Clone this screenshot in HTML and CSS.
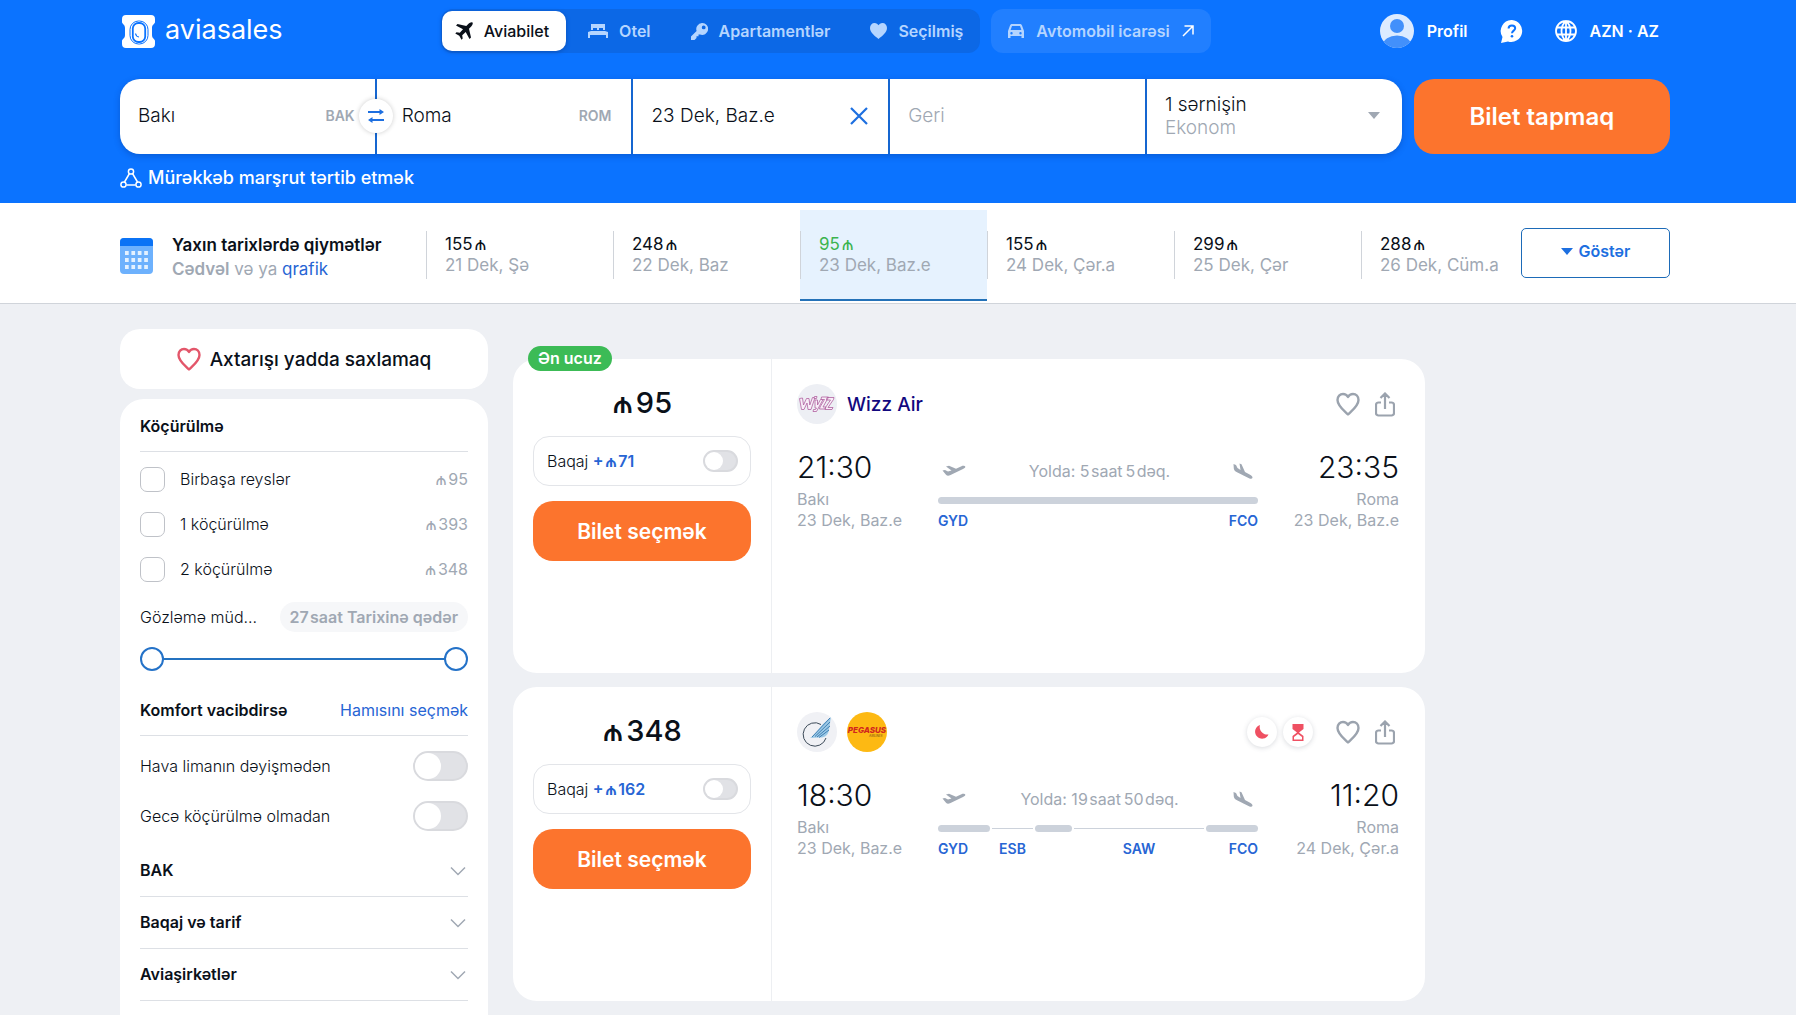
FILE: index.html
```html
<!DOCTYPE html>
<html lang="az">
	<head>
		<meta charset="UTF-8" />
		<meta name="viewport" content="width=device-width, initial-scale=1.0" />
		<title>Bakı - Roma | Aviasales</title>
		<link rel="stylesheet" href="styles.css">
	</head>
	<body>
		<!-- Shared icons -->
		<svg class="sprite" aria-hidden="true">
			<symbol id="i-heart" viewBox="0 0 24 24">
				<path d="M12 22.5C8 18.5 1.5 14 1.5 8C1.5 4.5 4 2 7 2C9.300 2 11 3.200 12 5C13 3.200 14.700 2 17 2C20 2 22.500 4.500 22.500 8C22.500 14 16 18.500 12 22.500Z" fill="none" stroke="currentColor" stroke-width="2.400" stroke-linejoin="round" />
			</symbol>
			<symbol id="i-share" viewBox="0 0 20 25">
				<path d="M6 10.500H3.500A2.500 2.500 0 0 0 1 13V21A2.500 2.500 0 0 0 3.500 23.500H16.500A2.500 2.500 0 0 0 19 21V13A2.500 2.500 0 0 0 16.500 10.500H14M10 17V2M5.500 6L10 1.500L14.500 6" fill="none" stroke="currentColor" stroke-width="2.200" />
			</symbol>
			<symbol id="i-takeoff" viewBox="0 0 24 12">
				<path d="M0.500 5.500L3 5L6 6.500L9.500 5.500L4 1.500L7 0.800L14 3.800L19.500 1.200C21 .6 23 .8 23.300 1.800C23.500 2.800 22 3.600 21 4L8 10.200C6.500 11 5 10.800 4 9.800Z" fill="currentColor" />
			</symbol>
			<symbol id="i-land" viewBox="0 0 20 17">
				<path d="M0.500 1L3 2L4.500 5L7.500 7L6.500 0.500L8.500 1.300L12 9L17.500 12C19 12.800 19.800 14.200 19.400 15C19 16 17.500 15.800 16.500 15.400L4.500 9.500C2.500 8.500 1 7.500.8 5.500Z" fill="currentColor" />
			</symbol>
			<symbol id="i-chevron" viewBox="0 0 16 10">
				<path d="M1 1.500L8 8.500L15 1.500" fill="none" stroke="currentColor" stroke-width="1.500" />
			</symbol>
		</svg>

		<header class="header">
			<div class="wrap">
				<div class="topbar">
					<a class="logo" href="#">
						<svg width="33" height="33" viewBox="0 0 33 33" aria-hidden="true">
							<path d="M4 0H29A4 4 0 0 1 33 4V7C33 9 30 9.500 30 13V20C30 23.500 33 24 33 26V29A4 4 0 0 1 29 33H4A4 4 0 0 1 0 29V26C0 24 3 23.500 3 20V13C3 9.500 0 9 0 7V4A4 4 0 0 1 4 0Z" fill="#fff" />
							<rect x="8" y="6" width="18" height="23" rx="8.500" fill="none" stroke="#0b73ff" stroke-width="1" />
							<rect x="10.800" y="8" width="12.400" height="19" rx="5.500" fill="none" stroke="#0b73ff" stroke-width="1.800" />
							<path d="M13.500 18.500Q14 21.500 17 22" fill="none" stroke="#0b73ff" stroke-width="1.200" />
						</svg>
						<span>aviasales</span>
					</a>

					<nav class="menu">
						<div class="tabs">
							<a class="tab tab-active" href="#">
								<svg width="18" height="18" viewBox="0 0 18 18" aria-hidden="true">
									<path d="M17.500.5C16.500-.3 14.500.8 13.500 1.800L11.300 4L2.500 2L1 3.500L8 7.300L4.800 10.800L1.500 10.300L.3 11.500L4.300 13.700L6.500 17.700L7.700 16.500L7.200 13.200L10.700 10L14.500 17L16 15.500L14 6.700L16.200 4.500C17.200 3.500 18.300 1.500 17.500.5Z" fill="currentColor" />
								</svg>
								<span>Aviabilet</span>
							</a>
							<a class="tab" href="#">
								<svg width="20" height="14" viewBox="0 0 20 14" aria-hidden="true">
									<path d="M3 0H17V6H15V4H11V6H9V4H5V6H3ZM0 8L3 7H17L20 8V14H18V11H2V14H0Z" fill="currentColor" />
								</svg>
								<span>Otel</span>
							</a>
							<a class="tab" href="#">
								<svg width="17" height="17" viewBox="0 0 17 17" aria-hidden="true">
									<path fill-rule="evenodd" d="M11 0A6 6 0 1 1 9 11.600L7.500 11.600V13.200H5.500V15L3.500 17H0V13.500L5.600 8A6 6 0 0 1 11 0ZM12.700 2.500A1.900 1.900 0 1 0 12.700 6.300A1.900 1.900 0 0 0 12.700 2.500Z" fill="currentColor" />
								</svg>
								<span>Apartamentlər</span>
							</a>
							<a class="tab" href="#">
								<svg width="17" height="16" viewBox="0 0 17 16" aria-hidden="true">
									<path d="M8.500 16C5 13 0 9.500 0 5C0 2 2 0 4.500 0C6.500 0 7.800 1 8.500 2.300C9.200 1 10.500 0 12.500 0C15 0 17 2 17 5C17 9.500 12 13 8.500 16Z" fill="currentColor" />
								</svg>
								<span>Seçilmiş</span>
							</a>
						</div>
						<a class="rental" href="#">
							<svg width="16" height="14" viewBox="0 0 16 14" aria-hidden="true">
								<path fill-rule="evenodd" d="M4 0H12C13 0 13.600.5 14 1.500L16 7V14H13.500V12H2.500V14H0V7L2 1.500C2.400.5 3 0 4 0ZM4 2L2.600 6H13.400L12 2ZM3.500 8A1.200 1.200 0 1 0 3.500 10.400A1.200 1.200 0 0 0 3.500 8ZM12.500 8A1.200 1.200 0 1 0 12.500 10.400A1.200 1.200 0 0 0 12.500 8Z" fill="currentColor" />
							</svg>
							<span>Avtomobil icarəsi</span>
							<svg class="out" width="12" height="12" viewBox="0 0 12 12" aria-hidden="true">
								<path d="M1 11L11 1M2.500 1H11V9.500" fill="none" stroke="currentColor" stroke-width="1.500" />
							</svg>
						</a>
					</nav>

					<div class="user">
						<a class="profile" href="#">
							<svg width="34" height="34" viewBox="0 0 34 34" aria-hidden="true">
								<clipPath id="face"><circle cx="17" cy="17" r="17" /></clipPath>
								<g clip-path="url(#face)">
									<rect width="34" height="34" fill="#dcebff" />
									<circle cx="17" cy="12" r="7" fill="#4290fb" />
									<ellipse cx="17" cy="31" rx="14" ry="9.500" fill="#4290fb" />
								</g>
							</svg>
							<span>Profil</span>
						</a>
						<a class="help" href="#" aria-label="Kömək">
							<svg width="23" height="23" viewBox="0 0 23 23" aria-hidden="true">
								<path d="M12 0A11 11 0 1 1 8 21.500L1 23L2.500 17A11 11 0 0 1 12 0Z" fill="#fff" />
								<path d="M8.600 8.500C8.600 6.500 10 5.400 11.900 5.400C13.900 5.400 15.200 6.600 15.200 8.300C15.200 10.500 12 10.800 12 13.200" fill="none" stroke="#0b73ff" stroke-width="2" />
								<circle cx="12" cy="16.300" r="1.300" fill="#0b73ff" />
							</svg>
						</a>
						<a class="locale" href="#">
							<svg width="22" height="22" viewBox="0 0 22 22" aria-hidden="true">
								<path d="M11 1A10 10 0 1 0 11 21A10 10 0 1 0 11 1ZM11 1C5 6 5 16 11 21C17 16 17 6 11 1ZM11 1V21M2 7.500H20M2 14.500H20" fill="none" stroke="#fff" stroke-width="1.800" />
							</svg>
							<span>AZN · AZ</span>
						</a>
					</div>
				</div>

				<form class="search">
					<div class="fields">
						<div class="field">
							<input id="from" type="text" value="Bakı" aria-label="Haradan" />
							<label class="code" for="from">BAK</label>
							<button class="swap" type="button" aria-label="Dəyişmək">
								<svg width="18" height="14" viewBox="0 0 18 14" aria-hidden="true">
									<path d="M1 3H14M4 11H17" stroke="currentColor" stroke-width="2" />
									<path d="M12.500 0L17 3L12.500 6ZM5.500 8L1 11L5.500 14Z" fill="currentColor" />
								</svg>
							</button>
						</div>
						<div class="field field-to">
							<input id="to" type="text" value="Roma" aria-label="Haraya" />
							<label class="code" for="to">ROM</label>
						</div>
						<div class="field">
							<input type="text" value="23 Dek, Baz.e" aria-label="Gediş" />
							<button class="clear" type="button" aria-label="Təmizləmək">
								<svg width="18" height="18" viewBox="0 0 18 18" aria-hidden="true">
									<path d="M1 1L17 17M17 1L1 17" stroke="currentColor" stroke-width="2.200" />
								</svg>
							</button>
						</div>
						<div class="field">
							<input type="text" placeholder="Geri" aria-label="Qayıdış" />
						</div>
						<button class="field passengers" type="button">
							<span class="who">1 sərnişin<span>Ekonom</span></span>
							<svg width="12" height="7" viewBox="0 0 12 7" aria-hidden="true">
								<path d="M0 0H12L6 7Z" fill="currentColor" />
							</svg>
						</button>
					</div>
					<button class="orange find" type="submit">Bilet tapmaq</button>
				</form>

				<a class="complex" href="#">
					<svg width="22" height="20" viewBox="0 0 22 20" aria-hidden="true">
						<path d="M9.500 5.500L4.500 14M12.500 5.500L17.500 14M6.500 17H15.500" stroke="currentColor" stroke-width="1.500" />
						<g fill="none" stroke="currentColor" stroke-width="1.500">
							<circle cx="11" cy="3.500" r="2.600" />
							<circle cx="3.500" cy="16.500" r="2.600" />
							<circle cx="18.500" cy="16.500" r="2.600" />
						</g>
					</svg>
					<span>Mürəkkəb marşrut tərtib etmək</span>
				</a>
			</div>
		</header>

		<section class="dates">
			<div class="wrap dates-row">
				<div class="dates-title">
					<svg width="33" height="36" viewBox="0 0 33 36" aria-hidden="true">
						<rect width="33" height="36" rx="4" fill="#6db1fd" />
						<path d="M0 8V4A4 4 0 0 1 4 0H29A4 4 0 0 1 33 4V8Z" fill="#0b73f5" />
						<path d="M5 15H29M5 22H29M5 29H29" stroke="#e4f1ff" stroke-width="4" stroke-dasharray="3.700 2.700" />
					</svg>
					<div>
						<h2>Yaxın tarixlərdə qiymətlər</h2>
						<p><b>Cədvəl</b> və ya <a href="#">qrafik</a></p>
					</div>
				</div>
				<div class="days">
					<a class="day" href="#"><b>155&#8202;₼</b><span>21 Dek, Şə</span></a>
					<a class="day" href="#"><b>248&#8202;₼</b><span>22 Dek, Baz</span></a>
					<a class="day day-active" href="#"><b>95&#8202;₼</b><span>23 Dek, Baz.e</span></a>
					<a class="day" href="#"><b>155&#8202;₼</b><span>24 Dek, Çər.a</span></a>
					<a class="day" href="#"><b>299&#8202;₼</b><span>25 Dek, Çər</span></a>
					<a class="day" href="#"><b>288&#8202;₼</b><span>26 Dek, Cüm.a</span></a>
				</div>
				<button class="show" type="button">
					<svg width="12" height="7" viewBox="0 0 12 7" aria-hidden="true">
						<path d="M0 0H12L6 7Z" fill="currentColor" />
					</svg>
					Göstər
				</button>
			</div>
		</section>

		<main class="wrap main">
			<aside class="sidebar">
				<button class="save" type="button">
					<svg width="24" height="24"><use href="#i-heart" /></svg>
					Axtarışı yadda saxlamaq
				</button>

				<div class="filters">
					<div class="filter-head"><h3>Köçürülmə</h3></div>
					<div class="checks">
						<label class="check"><input type="checkbox" /><span>Birbaşa reyslər</span><em>₼&#8202;95</em></label>
						<label class="check"><input type="checkbox" /><span>1 köçürülmə</span><em>₼&#8202;393</em></label>
						<label class="check"><input type="checkbox" /><span>2 köçürülmə</span><em>₼&#8202;348</em></label>
					</div>
					<div class="wait">
						<span>Gözləmə müd...</span>
						<b>27&#8202;saat Tarixinə qədər</b>
					</div>
					<div class="range">
						<input type="range" min="0" max="27" value="0" aria-label="Gözləmə müddəti, ən az" />
						<input type="range" min="0" max="27" value="27" aria-label="Gözləmə müddəti, ən çox" />
					</div>

					<div class="filter-head">
						<h3>Komfort vacibdirsə</h3>
						<a href="#">Hamısını seçmək</a>
					</div>
					<div class="switches">
						<label><span>Hava limanın dəyişmədən</span><input class="toggle" type="checkbox" /></label>
						<label><span>Gecə köçürülmə olmadan</span><input class="toggle" type="checkbox" /></label>
					</div>

					<button class="fold" type="button">BAK <svg width="16" height="10"><use href="#i-chevron" /></svg></button>
					<button class="fold" type="button">Baqaj və tarif <svg width="16" height="10"><use href="#i-chevron" /></svg></button>
					<button class="fold" type="button">Aviaşirkətlər <svg width="16" height="10"><use href="#i-chevron" /></svg></button>
				</div>
			</aside>

			<div class="results">
				<article class="ticket">
					<span class="badge">Ən ucuz</span>
					<div class="offer">
						<p class="price">₼&#8202;95</p>
						<label class="baggage">
							<span>Baqaj <b>+&#8202;₼&#8202;71</b></span>
							<input class="toggle toggle-small" type="checkbox" />
						</label>
						<button class="orange pick" type="button">Bilet seçmək</button>
					</div>
					<div class="info">
						<div class="carriers">
							<svg width="40" height="40" viewBox="0 0 40 40" aria-hidden="true">
								<circle cx="20" cy="20" r="20" fill="#edeff4" />
								<g fill="#f8eef8" stroke="#b0609f" stroke-width=".8" stroke-linejoin="round">
									<path d="M2.500 14.500L5.500 14L6.500 21L9.500 14.500H12L12.800 21L15.500 13.500H18L14 25.500H11L10 19L7 25.500H4.500Z" />
									<path d="M18 16H20.500L20.500 21L23.500 15.500H26L19.500 27.500H16L16.500 25.500H18.500L19.500 24H18ZM17.500 12.500H20L19.500 14.500H17Z" />
									<path d="M24.500 13H31.500L30.500 15L26 23H29L28 25H22.500L23 23L27.500 15.500H24ZM30 13.500H37L36.500 15.500L31 23.500H36L35 25.500H28L28.500 23.500L33.500 16H29.500Z" />
								</g>
							</svg>
							<span>Wizz Air</span>
							<div class="actions">
								<button type="button" aria-label="Seçilmişlərə əlavə etmək"><svg width="24" height="24"><use href="#i-heart" /></svg></button>
								<button type="button" aria-label="Paylaşmaq"><svg width="20" height="25"><use href="#i-share" /></svg></button>
							</div>
						</div>
						<div class="flight">
							<div class="point">
								<b>21:30</b>
								<span>Bakı</span>
								<span>23 Dek, Baz.e</span>
							</div>
							<div class="route">
								<div class="duration">
									<svg width="24" height="12"><use href="#i-takeoff" /></svg>
									<span>Yolda: 5&#8202;saat&#8201;5&#8202;dəq.</span>
									<svg width="20" height="17"><use href="#i-land" /></svg>
								</div>
								<div class="track" style="grid-template-columns: 1fr 1fr">
									<i class="seg seg-full"></i>
									<span>GYD</span>
									<span class="end">FCO</span>
								</div>
							</div>
							<div class="point point-end">
								<b>23:35</b>
								<span>Roma</span>
								<span>23 Dek, Baz.e</span>
							</div>
						</div>
					</div>
				</article>

				<article class="ticket">
					<div class="offer">
						<p class="price">₼&#8202;348</p>
						<label class="baggage">
							<span>Baqaj <b>+&#8202;₼&#8202;162</b></span>
							<input class="toggle toggle-small" type="checkbox" />
						</label>
						<button class="orange pick" type="button">Bilet seçmək</button>
					</div>
					<div class="info">
						<div class="carriers">
							<svg width="40" height="40" viewBox="0 0 40 40" aria-hidden="true">
								<circle cx="20" cy="20" r="20" fill="#f0f1f5" />
								<path d="M24 12.500A11.700 11.700 0 1 0 29 26" fill="none" stroke="#3c4a58" stroke-width="1" />
								<path d="M13 26C19 23 21 15 34 5C33 9 33 14 32 18C31 23 28 26 22 25.500Z" fill="#9cc9e6" />
								<path d="M15 25L33 6M18 24.500L33 10M20 25L33 14M22 25.500L32 18" stroke="#3f7fb4" stroke-width="1" />
							</svg>
							<svg width="40" height="40" viewBox="0 0 40 40" aria-hidden="true">
								<circle cx="20" cy="20" r="20" fill="#fdb913" />
								<text class="pegasus" x="20" y="21" text-anchor="middle">PEGASUS</text>
								<text class="pegasus-sub" x="22" y="25">AIRLINES</text>
							</svg>
							<div class="actions">
								<span class="warn">
									<svg width="16" height="16" viewBox="0 0 16 16" aria-hidden="true">
										<path d="M6 1A7 7 0 1 0 14.500 10.500A7.500 7.500 0 0 1 6 1Z" fill="#ef5062" />
									</svg>
								</span>
								<span class="warn">
									<svg width="12" height="17" viewBox="0 0 12 17" aria-hidden="true">
										<path d="M.5 0H11.500V5L7 8.500L11.500 12V17H.5V12L5 8.500L.5 5ZM2 13V15.500H10V13L6 10Z" fill="#ef5062" fill-rule="evenodd" />
									</svg>
								</span>
								<button class="after-warn" type="button" aria-label="Seçilmişlərə əlavə etmək"><svg width="24" height="24"><use href="#i-heart" /></svg></button>
								<button type="button" aria-label="Paylaşmaq"><svg width="20" height="25"><use href="#i-share" /></svg></button>
							</div>
						</div>
						<div class="flight">
							<div class="point">
								<b>18:30</b>
								<span>Bakı</span>
								<span>23 Dek, Baz.e</span>
							</div>
							<div class="route">
								<div class="duration">
									<svg width="24" height="12"><use href="#i-takeoff" /></svg>
									<span>Yolda: 19&#8202;saat&#8201;50&#8202;dəq.</span>
									<svg width="20" height="17"><use href="#i-land" /></svg>
								</div>
								<div class="track" style="grid-template-columns: 52fr 45fr 37fr 134fr 52fr">
									<i class="seg"></i><i class="stop"></i><i class="seg"></i><i class="stop"></i><i class="seg"></i>
									<span>GYD</span>
									<span class="mid">ESB</span>
									<span></span>
									<span class="mid">SAW</span>
									<span class="end">FCO</span>
								</div>
							</div>
							<div class="point point-end">
								<b>11:20</b>
								<span>Roma</span>
								<span>24 Dek, Çər.a</span>
							</div>
						</div>
					</div>
				</article>
			</div>
		</main>
	</body>
</html>
```
FILE: styles.css
```css
* {
	box-sizing: border-box;
}

body {
	margin: 0;
	background: #eef0f4;
	color: #0a1019;
	font-family: "Inter", "Liberation Sans", sans-serif;
	font-size: 16px;
	line-height: 21px;
	overflow-x: hidden;
}

a {
	color: #2765d4;
	text-decoration: none;
}

h2,
h3,
p {
	margin: 0;
}

button {
	border: none;
	background: none;
	padding: 0;
	color: inherit;
	font: inherit;
	cursor: pointer;
}

svg {
	display: block;
	flex: none;
}

.sprite {
	position: absolute;
	width: 0;
	height: 0;
}

.wrap {
	padding: 0 126px 0 120px;
}

.orange {
	background: #fc742d;
	color: #fff;
	border-radius: 20px;
	font-weight: 600;
}

/* Header */
.header {
	background: #0b73ff;
	color: #fff;
	padding: 9px 0 13px;
}

.topbar {
	display: flex;
	justify-content: space-between;
	align-items: center;
}

.logo {
	display: flex;
	align-items: center;
	gap: 10px;
	margin-left: 2px;
	color: #fff;
	font-size: 27px;
	line-height: 32px;
}

.logo span {
	padding-bottom: 2px;
}

.menu {
	display: flex;
	gap: 11px;
	font-weight: 600;
	line-height: 20px;
}

.tabs {
	display: flex;
	align-items: center;
	height: 44px;
	padding-right: 17px;
	background: #0c68e6;
	border-radius: 12px;
}

.tab {
	display: flex;
	align-items: center;
	gap: 11px;
	color: #b5d5ff;
	margin-left: 40px;
}

.tab-active {
	height: 40px;
	padding: 0 17px 0 13px;
	margin: 0 -18px 0 1px;
	background: #fff;
	border-radius: 10px;
	color: #0a1019;
	font-weight: 500;
	box-shadow: 0 1px 4px #0a50b8;
}

.rental {
	display: flex;
	align-items: center;
	gap: 12px;
	height: 44px;
	padding: 0 17px;
	background: #217fff;
	border-radius: 12px;
	color: #b5d5ff;
}

.out {
	color: #fff;
}

.user {
	display: flex;
	align-items: center;
	padding: 0 11px;
	gap: 32px;
	font-weight: 600;
}

.user a {
	color: #fff;
}

.profile,
.locale {
	display: flex;
	align-items: center;
	gap: 13px;
}

.search {
	display: grid;
	grid-template-columns: 5fr 1fr;
	gap: 12px;
	height: 75px;
	margin-top: 26px;
}

.fields {
	display: grid;
	grid-template-columns: repeat(5, 1fr);
	gap: 2px;
	border-radius: 20px;
	background: #1566d0;
	box-shadow: 0 2px 6px rgba(0, 40, 120, 0.3);
}

.field {
	position: relative;
	display: flex;
	align-items: center;
	min-width: 0;
	padding: 0 20px 2px 18px;
	background: #fff;
	color: #0a1019;
	font-size: 19px;
	font-weight: 300;
}

.field:first-child {
	border-radius: 20px 0 0 20px;
}

.field-to {
	padding-left: 25px;
}

.field input {
	flex: 1;
	min-width: 0;
	height: 32px;
	padding: 0;
	border: none;
	outline: none;
	background: none;
	color: inherit;
	font: inherit;
	line-height: 32px;
}

.field input::placeholder {
	color: #a0a8b3;
}

.code {
	color: #a0a8b3;
	font-size: 14px;
	font-weight: 600;
}

.swap {
	position: absolute;
	right: -18px;
	z-index: 1;
	width: 34px;
	height: 34px;
	display: grid;
	place-items: center;
	border-radius: 50%;
	background: #fff;
	color: #1d6fe0;
	box-shadow: 0 0 5px rgba(0, 0, 0, 0.2);
}

.clear {
	color: #1d6fe0;
}

.passengers {
	justify-content: space-between;
	padding-right: 22px;
	border-radius: 0 20px 20px 0;
	line-height: 23px;
	text-align: left;
}

.who span {
	display: block;
}

.passengers span span,
.passengers svg {
	color: #a0a8b3;
}

.find {
	font-size: 24px;
}

.complex {
	display: flex;
	align-items: center;
	gap: 6px;
	width: fit-content;
	margin-top: 12px;
	color: #fff;
	font-size: 18px;
	font-weight: 500;
	line-height: 24px;
}

/* Prices for the nearest dates */
.dates {
	height: 101px;
	background: #fff;
	border-bottom: 1px solid #d0d4da;
}

.dates-row {
	display: flex;
}

.dates-title {
	display: flex;
	gap: 19px;
	width: 306px;
	padding-top: 30px;
	font-size: 17px;
	line-height: 24px;
	color: #a0a8b3;
}

.dates-title svg {
	margin-top: 5px;
}

.dates-title h2 {
	color: #0a1019;
	font-size: 17px;
	font-weight: 600;
	white-space: nowrap;
}

.dates-title b {
	font-weight: 600;
}

.days {
	display: flex;
	flex: 1;
	min-width: 0;
	margin-top: 7px;
	overflow: hidden;
}

.day {
	flex: 0 0 187px;
	height: 91px;
	padding: 21px 0;
	border-bottom: 2px solid transparent;
	font-size: 17px;
	line-height: 21px;
	white-space: nowrap;
}

.day b,
.day span {
	display: block;
	padding-left: 18px;
	border-left: 1px solid #d0d4da;
	color: #a0a8b3;
	font-weight: 400;
}

.day b {
	padding-top: 3px;
	color: #0a1019;
}

.day span {
	padding-bottom: 3px;
}

.day-active {
	background: #e6f2fe;
	border-color: #2472b8;
}

.day-active b {
	color: #3cb44f;
}

.show {
	display: flex;
	align-items: center;
	justify-content: center;
	gap: 6px;
	width: 149px;
	height: 50px;
	margin: 25px 0 0 18px;
	padding-bottom: 4px;
	border: 1px solid #1d6bb8;
	border-radius: 5px;
	color: #1d6fe0;
	font-weight: 600;
}

/* Content */
.main {
	display: flex;
	gap: 25px;
	padding-top: 25px;
	align-items: flex-start;
}

.sidebar {
	flex: none;
	width: 368px;
}

.save {
	display: flex;
	align-items: center;
	justify-content: center;
	gap: 9px;
	width: 100%;
	height: 60px;
	border-radius: 20px;
	background: #fff;
	font-size: 19px;
	font-weight: 500;
}

.save svg {
	color: #e3566a;
}

.filters {
	margin-top: 10px;
	padding: 0 20px 40px;
	border-radius: 24px;
	background: #fff;
	font-weight: 300;
}

.filter-head {
	display: flex;
	justify-content: space-between;
	padding: 17px 0 14px;
	border-bottom: 1px solid #dde0e5;
	font-weight: 400;
}

.filter-head h3 {
	font-size: 16px;
	font-weight: 600;
}

.checks {
	display: grid;
	gap: 20px;
	padding-top: 15px;
}

.check {
	display: flex;
	align-items: center;
	height: 25px;
}

.check input {
	appearance: none;
	width: 25px;
	height: 25px;
	margin: 0 15px 0 0;
	border: 1px solid #bfc2c8;
	border-radius: 7px;
}

.check em {
	margin-left: auto;
	color: #a0a8b3;
	font-style: normal;
	font-weight: 400;
}

.wait {
	display: flex;
	align-items: center;
	justify-content: space-between;
	height: 30px;
	margin-top: 20px;
}

.wait b {
	padding: 0 10px;
	border-radius: 15px;
	background: #f6f7f9;
	color: #a0a8b3;
	font-weight: 600;
	line-height: 30px;
}

.range {
	display: grid;
	margin: 15px 0 12px;
	background: linear-gradient(#2472c0, #2472c0) center / 90% 2px no-repeat;
}

.range input {
	grid-area: 1 / 1;
	appearance: none;
	width: 100%;
	height: 24px;
	margin: 0;
	background: none;
	pointer-events: none;
}

.range input::-webkit-slider-thumb {
	appearance: none;
	width: 24px;
	height: 24px;
	border: 2px solid #2472c8;
	border-radius: 50%;
	background: #fff;
	pointer-events: auto;
}

.switches {
	display: grid;
	gap: 20px;
	padding: 15px 0 14px;
}

.switches label,
.baggage {
	display: flex;
	align-items: center;
	justify-content: space-between;
}

.toggle {
	appearance: none;
	display: flex;
	width: 55px;
	height: 30px;
	margin: 0;
	border: 2px solid #d9dade;
	border-radius: 15px;
	background: #e1e2e6;
}

.toggle::before {
	content: "";
	width: 26px;
	border-radius: 50%;
	background: #fff;
}

.toggle:checked {
	justify-content: flex-end;
	background: #1d6fe0;
}

.toggle-small {
	width: 35px;
	height: 22px;
}

.toggle-small::before {
	width: 18px;
}

.fold {
	display: flex;
	align-items: center;
	justify-content: space-between;
	width: 100%;
	height: 52px;
	padding-right: 2px;
	border-bottom: 1px solid #dde0e5;
	font-weight: 600;
}

.fold svg {
	color: #a0a8b3;
}

/* Tickets */
.results {
	display: grid;
	gap: 14px;
	width: 912px;
	padding-top: 30px;
}

.ticket {
	position: relative;
	display: flex;
	min-height: 314px;
	border-radius: 24px;
	background: #fff;
}

.badge {
	position: absolute;
	top: -13px;
	left: 15px;
	padding: 0 10px;
	border-radius: 13px;
	background: #3cbb56;
	color: #fff;
	font-weight: 600;
	line-height: 25px;
}

.offer {
	width: 259px;
	padding: 24px 20px;
	border-right: 1px solid #edeff2;
}

.price {
	font-size: 29px;
	font-weight: 500;
	line-height: 40px;
	text-align: center;
}

.baggage {
	height: 50px;
	margin: 13px 0 15px;
	padding: 0 12px 0 13px;
	border: 1px solid #e3e5e9;
	border-radius: 16px;
	font-weight: 300;
}

.baggage b {
	color: #2765d4;
	font-weight: 600;
}

.pick {
	width: 100%;
	height: 60px;
	font-size: 21px;
}

.info {
	flex: 1;
	padding: 25px 26px 25px 25px;
}

.carriers {
	display: flex;
	align-items: center;
	gap: 10px;
	height: 40px;
	color: #12087e;
	font-size: 19px;
	font-weight: 500;
}

.pegasus {
	fill: #d1261f;
	font-size: 8px;
	font-style: italic;
	font-weight: 800;
}

.pegasus-sub {
	fill: #8a5a14;
	font-size: 3px;
	font-style: italic;
}

.actions {
	display: flex;
	align-items: center;
	gap: 15px;
	margin-left: auto;
	padding-right: 4px;
	color: #9ba3ae;
}

.warn {
	display: grid;
	place-items: center;
	width: 30px;
	height: 30px;
	margin-right: -9px;
	border-radius: 50%;
	box-shadow: 0 1px 5px rgba(60, 70, 90, 0.2);
}

.after-warn {
	margin-left: 17px;
}

.flight {
	display: grid;
	grid-template-columns: 141px 1fr 141px;
	margin-top: 25px;
}

.point {
	color: #a0a8b3;
	white-space: nowrap;
}

.point b {
	display: block;
	margin-bottom: 4px;
	color: #0a1019;
	font-size: 30px;
	font-weight: 300;
	line-height: 36px;
}

.point span {
	display: block;
}

.point-end {
	text-align: right;
}

.duration {
	display: flex;
	align-items: center;
	justify-content: space-between;
	height: 44px;
	padding: 0 5px 0 4px;
	color: #a0a8b3;
}

.track {
	display: grid;
	grid-template-rows: 7px auto;
	align-items: center;
	row-gap: 6px;
	margin-top: 4px;
	color: #2765d4;
	font-size: 14px;
	font-weight: 600;
}

.seg {
	height: 7px;
	border-radius: 4px;
	background: #ccd2db;
}

.seg-full {
	grid-column: 1 / -1;
}

.stop {
	height: 1px;
	margin: 0 2px;
	background: #ccd2db;
}

.mid {
	text-align: center;
}

.end {
	text-align: right;
}
```
